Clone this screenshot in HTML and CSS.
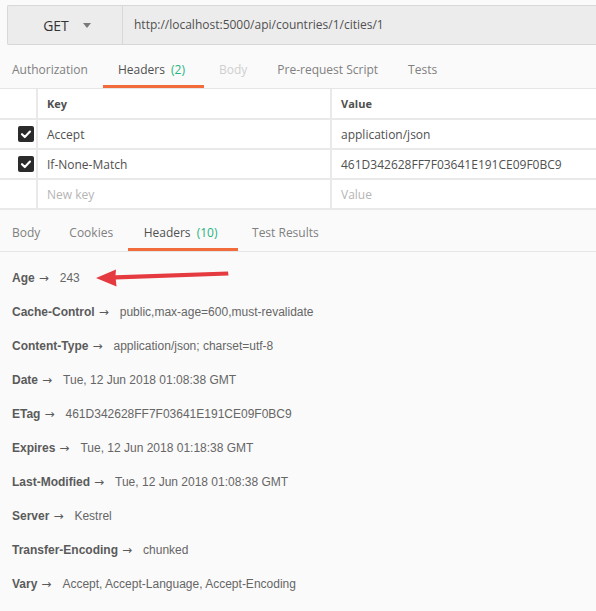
FILE: index.html
```html
<!DOCTYPE html>
<html>
<head>
<meta charset="utf-8">
<link rel="stylesheet" href="styles.css">
</head>
<body>
<div class="page">
  <div class="urlbar">
    <div class="method"><span>GET</span><span class="caret"></span></div>
    <div class="url">http://localhost:5000/api/countries/1/cities/1</div>
  </div>

  <div class="tabs req-tabs">
    <div class="tab first">Authorization</div>
    <div class="tab active">Headers <span class="count">(2)</span></div>
    <div class="tab disabled">Body</div>
    <div class="tab">Pre-request Script</div>
    <div class="tab">Tests</div>
  </div>

  <div class="table">
    <div class="cell chk"></div>
    <div class="cell head">Key</div>
    <div class="cell head">Value</div>

    <div class="cell chk"><span class="box"><svg viewBox="0 0 16 16" width="16" height="16"><path d="M4 8.2 L6.8 11 L12 5.6" fill="none" stroke="#fff" stroke-width="2.2" stroke-linecap="round" stroke-linejoin="round"/></svg></span></div>
    <div class="cell">Accept</div>
    <div class="cell">application/json</div>

    <div class="cell chk"><span class="box"><svg viewBox="0 0 16 16" width="16" height="16"><path d="M4 8.2 L6.8 11 L12 5.6" fill="none" stroke="#fff" stroke-width="2.2" stroke-linecap="round" stroke-linejoin="round"/></svg></span></div>
    <div class="cell">If-None-Match</div>
    <div class="cell">461D342628FF7F03641E191CE09F0BC9</div>

    <div class="cell chk"></div>
    <div class="cell ph">New key</div>
    <div class="cell ph">Value</div>
  </div>

  <div class="tabs res-tabs">
    <div class="tab first">Body</div>
    <div class="tab">Cookies</div>
    <div class="tab active">Headers <span class="count">(10)</span></div>
    <div class="tab">Test Results</div>
  </div>

  <div class="headers">
    <div class="row"><span class="k">Age</span><span class="ar">→</span><span class="v">243</span>
      <svg class="redarrow" viewBox="0 0 136 20" width="136" height="20"><path d="M1 10 L21 1.5 L20.5 7.2 L133 3.6 L133.5 7.6 L20.8 11.6 L21.5 18.5 Z" fill="#e53a3f"/></svg>
    </div>
    <div class="row"><span class="k">Cache-Control</span><span class="ar">→</span><span class="v">public,max-age=600,must-revalidate</span></div>
    <div class="row"><span class="k">Content-Type</span><span class="ar">→</span><span class="v">application/json; charset=utf-8</span></div>
    <div class="row"><span class="k">Date</span><span class="ar">→</span><span class="v">Tue, 12 Jun 2018 01:08:38 GMT</span></div>
    <div class="row"><span class="k">ETag</span><span class="ar">→</span><span class="v">461D342628FF7F03641E191CE09F0BC9</span></div>
    <div class="row"><span class="k">Expires</span><span class="ar">→</span><span class="v">Tue, 12 Jun 2018 01:18:38 GMT</span></div>
    <div class="row"><span class="k">Last-Modified</span><span class="ar">→</span><span class="v">Tue, 12 Jun 2018 01:08:38 GMT</span></div>
    <div class="row"><span class="k">Server</span><span class="ar">→</span><span class="v">Kestrel</span></div>
    <div class="row"><span class="k">Transfer-Encoding</span><span class="ar">→</span><span class="v">chunked</span></div>
    <div class="row"><span class="k">Vary</span><span class="ar">→</span><span class="v">Accept, Accept-Language, Accept-Encoding</span></div>
  </div>
</div>
</body>
</html>
```

FILE: styles.css
```css
html, body {
  margin: 0;
  padding: 0;
  background: #fafafa;
}
body {
  font-family: "Open Sans", "Liberation Sans", sans-serif;
  font-size: 12px;
  color: #505050;
  width: 596px;
  height: 611px;
  overflow: hidden;
}
.page {
  padding-top: 5px;
}
.urlbar {
  margin-left: 7px;
  height: 38px;
  display: flex;
  background: #ececec;
  border: 1px solid #d8d8d8;
  border-right: none;
  border-radius: 2px 0 0 2px;
}
.method {
  width: 115px;
  border-right: 1px solid #d8d8d8;
  display: flex;
  align-items: center;
  justify-content: center;
  gap: 14px;
  font-size: 14px;
  color: #333;
  padding-left: 4px;
  box-sizing: border-box;
}
.caret {
  width: 0;
  height: 0;
  border-left: 4px solid transparent;
  border-right: 4px solid transparent;
  border-top: 5px solid #7a7a7a;
  margin-top: 1px;
}
.url {
  padding-left: 11px;
  line-height: 38px;
  font-size: 12px;
  color: #505050;
}
.tabs {
  display: flex;
  border-bottom: 1px solid #e6e6e6;
}
.req-tabs {
  margin-top: 6px;
  height: 37px;
}
.res-tabs {
  height: 41px;
}
.tab {
  padding: 3px 15px 0 15px;
  display: flex;
  align-items: center;
  color: #808080;
  font-size: 12px;
  border-bottom: 3px solid transparent;
}
.res-tabs .tab {
  padding: 6px 14.5px 0 14.5px;
}
.tab.first,
.res-tabs .tab.first {
  padding-left: 12px;
}
.tab.active {
  color: #505050;
  border-bottom-color: #f26b3a;
  white-space: pre;
  padding-left: 15px;
  padding-right: 19px;
}
.res-tabs .tab.active {
  padding-left: 16px;
  padding-right: 20px;
}
.tab.disabled {
  color: #cfcfcf;
}
.count {
  color: #26b47f;
  margin-left: 3px;
}
.table {
  display: grid;
  grid-template-columns: 36px 292px 1fr;
  grid-template-rows: 29px 28px 28px 28px;
  gap: 2px;
  background: #e9e9e9;
  border-bottom: 2px solid #e9e9e9;
}
.cell {
  background: #fff;
  padding-left: 9px;
  display: flex;
  align-items: center;
  color: #505050;
  font-size: 12px;
}
.cell.head {
  font-weight: bold;
  font-size: 11px;
}
.cell.ph {
  color: #b5b5b5;
}
.cell.chk {
  padding-left: 0;
  justify-content: flex-end;
  padding-right: 2px;
}
.box {
  width: 16px;
  height: 16px;
  background: #2b2b2b;
  border-radius: 2px;
  display: block;
}
.box svg {
  display: block;
}
.headers {
  padding-top: 9px;
  font-family: "Liberation Sans", Arial, sans-serif;
  font-size: 12px;
}
.row {
  position: relative;
  height: 34px;
  line-height: 34px;
  padding-left: 12px;
  white-space: nowrap;
}
.k {
  font-weight: bold;
  color: #5a5a5a;
}
.ar {
  color: #5a5a5a;
  margin-left: 4px;
  font-family: "DejaVu Sans", sans-serif;
  font-size: 12px;
}
.v {
  color: #666;
  margin-left: 11px;
}
.redarrow {
  position: absolute;
  left: 95px;
  top: 7px;
}
```
